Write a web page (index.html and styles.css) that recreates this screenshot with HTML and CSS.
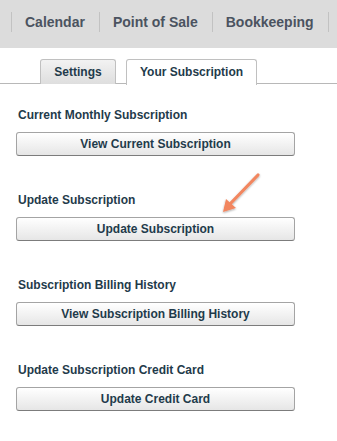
FILE: index.html
```html
<!DOCTYPE html>
<html>
<head>
<meta charset="utf-8">
<link rel="stylesheet" href="styles.css">
</head>
<body>
<div class="topbar">
  <nav class="nav">
    <span class="nav-item">Calendar</span>
    <span class="nav-item">Point of Sale</span>
    <span class="nav-item">Bookkeeping</span>
    <span class="nav-item nav-end"></span>
  </nav>
</div>
<div class="tabs">
  <div class="tab">Settings</div>
  <div class="tab tab-active">Your Subscription</div>
</div>
<main class="content">
  <section class="section">
    <h3 class="heading">Current Monthly Subscription</h3>
    <button class="btn">View Current Subscription</button>
  </section>
  <section class="section">
    <h3 class="heading">Update Subscription</h3>
    <button class="btn">Update Subscription</button>
  </section>
  <section class="section">
    <h3 class="heading">Subscription Billing History</h3>
    <button class="btn">View Subscription Billing History</button>
  </section>
  <section class="section">
    <h3 class="heading">Update Subscription Credit Card</h3>
    <button class="btn">Update Credit Card</button>
  </section>
  <svg class="arrow" width="50" height="50" viewBox="0 0 50 50">
    <defs>
      <filter id="sh" x="-30%" y="-30%" width="160%" height="160%">
        <feGaussianBlur in="SourceAlpha" stdDeviation="1"/>
        <feOffset dx="0" dy="1" result="b"/>
        <feComponentTransfer><feFuncA type="linear" slope="0.35"/></feComponentTransfer>
        <feMerge><feMergeNode/><feMergeNode in="SourceGraphic"/></feMerge>
      </filter>
    </defs>
    <g filter="url(#sh)">
      <line x1="43" y1="5" x2="14" y2="35" stroke="#f2865f" stroke-width="3.2" stroke-linecap="round"/>
      <polygon points="8,42 11,29 21,38" fill="#f2865f"/>
    </g>
  </svg>
</main>
</body>
</html>
```

FILE: styles.css
```css
* { box-sizing: border-box; }
body {
  margin: 0;
  background: #fff;
  font-family: "Liberation Sans", Arial, Helvetica, sans-serif;
}
.topbar {
  height: 48px;
  background: #dcdcdc;
}
.nav {
  display: flex;
  padding: 12px 0 0 11px;
}
.nav-item {
  border-left: 1px solid #c2c2c2;
  padding: 0 14px 0 13px;
  height: 20px;
  line-height: 20px;
  font-size: 14px;
  font-weight: bold;
  color: #4b5360;
  white-space: nowrap;
}
.nav-end { padding: 0; }
.tabs {
  display: flex;
  gap: 10px;
  padding: 11px 0 0 40px;
  height: 36px;
  border-bottom: 1px solid #b8b8b8;
}
.tab {
  width: 76px;
  height: 25px;
  border: 1px solid #c0c0c0;
  border-bottom: none;
  border-radius: 3px 3px 0 0;
  background: linear-gradient(#f2f2f2, #dedede);
  font-size: 12px;
  font-weight: bold;
  color: #1f3b4b;
  text-align: center;
  line-height: 24px;
}
.tab-active {
  width: 131px;
  height: 26px;
  background: #fff;
  position: relative;
}
.content {
  position: relative;
  padding: 24px 0 0 16px;
}
.section {
  display: flex;
  flex-direction: column;
  align-items: flex-start;
  margin-bottom: 37px;
}
.heading {
  margin: 0 0 10px 2px;
  font-size: 12px;
  line-height: 14px;
  font-weight: bold;
  color: #1f3b4b;
}
.btn {
  width: 279px;
  height: 24px;
  padding: 0;
  border: 1px solid #a4a4a4;
  border-bottom-color: #7c7c7c;
  border-radius: 3px;
  background: linear-gradient(#ffffff, #e6e6e6);
  font-family: "Liberation Sans", Arial, Helvetica, sans-serif;
  font-size: 12px;
  font-weight: bold;
  color: #1f3b4b;
  text-align: center;
}
.arrow {
  position: absolute;
  left: 215px;
  top: 86px;
}
```
